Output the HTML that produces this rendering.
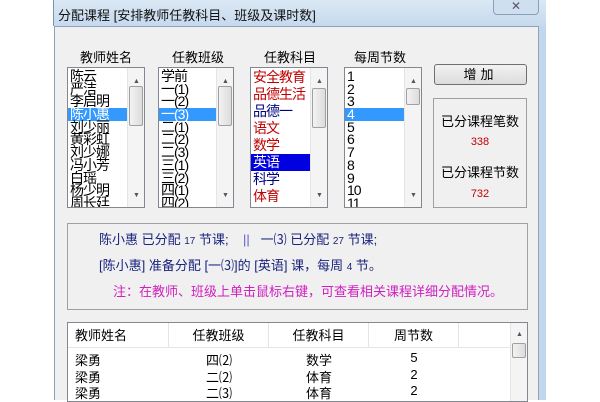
<!DOCTYPE html>
<html><head><meta charset="utf-8"><style>
*{margin:0;padding:0;box-sizing:border-box}
body{width:600px;height:400px;background:#fff;position:relative;overflow:hidden;font-family:"Liberation Sans","Noto Sans CJK SC","WenQuanYi Zen Hei",sans-serif;font-size:12px;color:#000}
.abs{position:absolute}
.title{left:53px;top:0;width:493px;height:26px;background:linear-gradient(#dbe8f4,#c6daee);border-left:1px solid #7d93ad}
.title span{position:absolute;left:4px;top:5px;font-size:13px;color:#111}
.close{left:493px;top:-2px;width:46px;height:17px;border:1px solid #8aa0b8;border-radius:0 0 4px 4px;background:#cfdff0;text-align:center;font-size:12px;line-height:15px;color:#556}
.frame{left:539px;top:26px;width:7px;height:374px;background:#c3d7ec}
.client{left:54px;top:26px;width:485px;height:374px;background:#f0f0f0;border:1px solid #8ea3bb;border-bottom:none}
.lbl{font-size:13px;top:47px}
.list{background:#fff;border:1px solid #828790;overflow:hidden;top:67px;height:141px}
.list .it{height:12.7px;line-height:12.7px;font-size:14px;padding-left:2px;white-space:nowrap;letter-spacing:-1px}
.sb{position:absolute;right:0;top:0;width:17px;height:100%;background:#f4f4f4;border-left:1px solid #e5e5e5}
.sb .th{position:absolute;left:1px;width:14px;height:40px;border:1px solid #a0a0a0;border-radius:2px;background:linear-gradient(90deg,#f3f3f3,#dcdcdc)}
.sb .up,.sb .dn{position:absolute;left:5px;font-size:7px;color:#555}
.sel{background:#3399ff;color:#fff;width:calc(100% - 17px)}
.sub .it{height:17px;line-height:17px;font-size:14px}
.r{color:#c00000}.b{color:#000080}
.btn{left:434px;top:64px;width:93px;height:21px;border:1px solid #707070;border-radius:3px;background:linear-gradient(#f2f2f2,#dcdcdc);text-align:center;line-height:19px;font-size:13px;letter-spacing:4px}
.stats{left:433px;top:98px;width:94px;height:110px;border:1px solid #a0a0a0;text-align:center}
.info{left:67px;top:223px;width:461px;height:87px;border:1px solid #a0a0a0;font-size:13px;color:#1a237e}
.tbl{left:67px;top:322px;width:461px;height:80px;border:1px solid #828790;background:#fff}
.hd{position:absolute;top:0;left:0;height:25px;width:443px;border-bottom:1px solid #e5e5e5}
.hd div{position:absolute;top:0;height:25px;line-height:25px;font-size:13px;border-right:1px solid #e5e5e5;text-align:center}
.row div{position:absolute;font-size:13px;text-align:center}
</style></head><body>
<div class="abs title"><span>分配课程 [安排教师任教科目、班级及课时数]</span></div>
<div class="abs close">✕</div>
<div class="abs frame"></div>
<div class="abs client"></div>

<div class="abs lbl" style="left:80px">教师姓名</div>
<div class="abs lbl" style="left:172px">任教班级</div>
<div class="abs lbl" style="left:264px">任教科目</div>
<div class="abs lbl" style="left:354px">每周节数</div>

<div class="abs list" style="left:67px;width:78px;padding-top:2px">
<div class="it">陈云</div><div class="it">严洁</div><div class="it">李启明</div><div class="it sel">陈小惠</div><div class="it">刘少丽</div><div class="it">黄彩虹</div><div class="it">刘少娜</div><div class="it">冯小芳</div><div class="it">白瑶</div><div class="it">杨少明</div><div class="it">周长廷</div>
<div class="sb"><span class="up" style="top:10px">▲</span><div class="th" style="top:18px"></div><span class="dn" style="top:124px">▼</span></div></div>

<div class="abs list" style="left:158px;width:76px;padding-top:2px">
<div class="it">学前</div><div class="it">一(1)</div><div class="it">一(2)</div><div class="it sel">一(3)</div><div class="it">二(1)</div><div class="it">二(2)</div><div class="it">二(3)</div><div class="it">三(1)</div><div class="it">三(2)</div><div class="it">四(1)</div><div class="it">四(2)</div>
<div class="sb"><span class="up" style="top:10px">▲</span><div class="th" style="top:18px"></div><span class="dn" style="top:124px">▼</span></div></div>

<div class="abs list sub" style="left:250px;width:78px;padding-top:1px">
<div class="it r">安全教育</div><div class="it r">品德生活</div><div class="it b">品德一</div><div class="it r">语文</div><div class="it r">数学</div><div class="it" style="background:#0000e0;color:#fff;width:59px">英语</div><div class="it b">科学</div><div class="it r">体育</div>
<div class="sb"><span class="up" style="top:10px">▲</span><div class="th" style="top:20px"></div><span class="dn" style="top:124px">▼</span></div></div>

<div class="abs list" style="left:344px;width:78px;padding-top:2px">
<div class="it">1</div><div class="it">2</div><div class="it">3</div><div class="it sel">4</div><div class="it">5</div><div class="it">6</div><div class="it">7</div><div class="it">8</div><div class="it">9</div><div class="it">10</div><div class="it">11</div>
<div class="sb"><span class="up" style="top:10px">▲</span><div class="th" style="top:20px;height:17px"></div><span class="dn" style="top:124px">▼</span></div></div>

<div class="abs btn">增加</div>
<div class="abs stats">
<div style="position:absolute;top:12px;width:100%;font-size:13px">已分课程笔数</div>
<div style="position:absolute;top:37px;width:100%;font-size:11px;color:#c00000">338</div>
<div style="position:absolute;top:63px;width:100%;font-size:13px">已分课程节数</div>
<div style="position:absolute;top:89px;width:100%;font-size:11px;color:#c00000">732</div>
</div>

<div class="abs info">
<div style="position:absolute;left:31px;top:5px;white-space:nowrap">陈小惠 已分配 <span style="font-size:10px">17</span> 节课; &nbsp;&nbsp; <span style="color:#6060c0">||</span> &nbsp; 一⑶ 已分配 <span style="font-size:10px">27</span> 节课;</div>
<div style="position:absolute;left:31px;top:31px;white-space:nowrap">[陈小惠] 准备分配 [一⑶]的 [英语] 课，每周 <span style="font-size:10px">4</span> 节。</div>
<div style="position:absolute;left:45px;top:57px;white-space:nowrap;color:#d020c0">注：在教师、班级上单击鼠标右键，可查看相关课程详细分配情况。</div>
</div>

<div class="abs tbl">
<div class="hd"><div style="left:0;width:101px;text-align:left;padding-left:7px">教师姓名</div><div style="left:101px;width:100px">任教班级</div><div style="left:201px;width:100px">任教科目</div><div style="left:301px;width:90px">周节数</div></div>
<div class="sb" style="height:78px"><span class="up" style="top:8px">▲</span><div class="th" style="top:20px;height:15px"></div></div>
<div class="row" style="position:absolute;top:27px;left:0;width:443px;height:17px"><div style="left:7px">梁勇</div><div style="left:101px;width:100px">四⑵</div><div style="left:201px;width:100px">数学</div><div style="left:301px;width:90px">5</div></div>
<div class="row" style="position:absolute;top:44px;left:0;width:443px;height:17px"><div style="left:7px">梁勇</div><div style="left:101px;width:100px">二⑵</div><div style="left:201px;width:100px">体育</div><div style="left:301px;width:90px">2</div></div>
<div class="row" style="position:absolute;top:60px;left:0;width:443px;height:17px"><div style="left:7px">梁勇</div><div style="left:101px;width:100px">二⑶</div><div style="left:201px;width:100px">体育</div><div style="left:301px;width:90px">2</div></div>
</div>
</body></html>
